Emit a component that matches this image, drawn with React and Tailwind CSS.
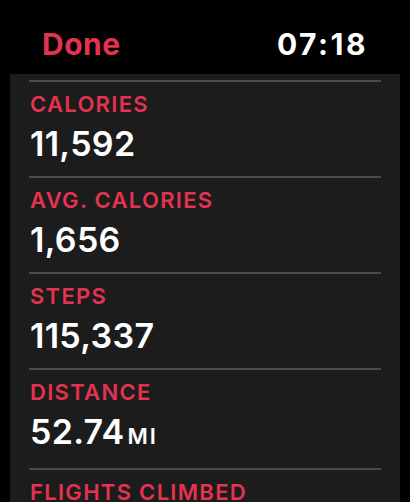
import React from 'react';

const stats = [
  { label: 'CALORIES', value: '11,592' },
  { label: 'AVG. CALORIES', value: '1,656' },
  { label: 'STEPS', value: '115,337' },
  { label: 'DISTANCE', value: '52.74', unit: 'MI' },
  { label: 'FLIGHTS CLIMBED', value: '12' },
];

function StatRow({ label, value, unit }) {
  return (
    <div className="flex flex-col">
      <div className="h-[2px] bg-[#4b4b4b]" />
      <div className="pt-[9px] pb-[12px] px-[1px]">
        <div className="text-[22px] leading-[26px] font-semibold tracking-[1.3px] text-[#e33351]">{label}</div>
        <div className="mt-[7px] text-[34px] leading-[40px] font-semibold text-white flex items-baseline">
          <span className="tracking-[0.3px]">{value}</span>
          {unit && <span className="text-[22px] ml-[3px] tracking-[2px]">{unit}</span>}
        </div>
      </div>
    </div>
  );
}

export default function App() {
  return (
    <div className="w-[410px] h-[502px] overflow-hidden bg-black" style={{ fontFamily: 'Inter, "Noto Sans", sans-serif' }}>
      {/* Header */}
      <div className="flex items-center justify-between pt-[26px] pl-[42px] pr-[42px]">
        <span className="text-[30px] leading-[36px] font-bold text-[#e33351] tracking-[0.5px]">Done</span>
        <span className="text-[30px] leading-[36px] font-bold text-white tracking-[2.5px]">07:18</span>
      </div>

      {/* Stats panel */}
      <div className="mt-[12px] mx-[10px] bg-[#1c1c1c] px-[19px] pt-[6px]">
        {stats.map((s) => (
          <StatRow key={s.label} {...s} />
        ))}
      </div>
    </div>
  );
}
